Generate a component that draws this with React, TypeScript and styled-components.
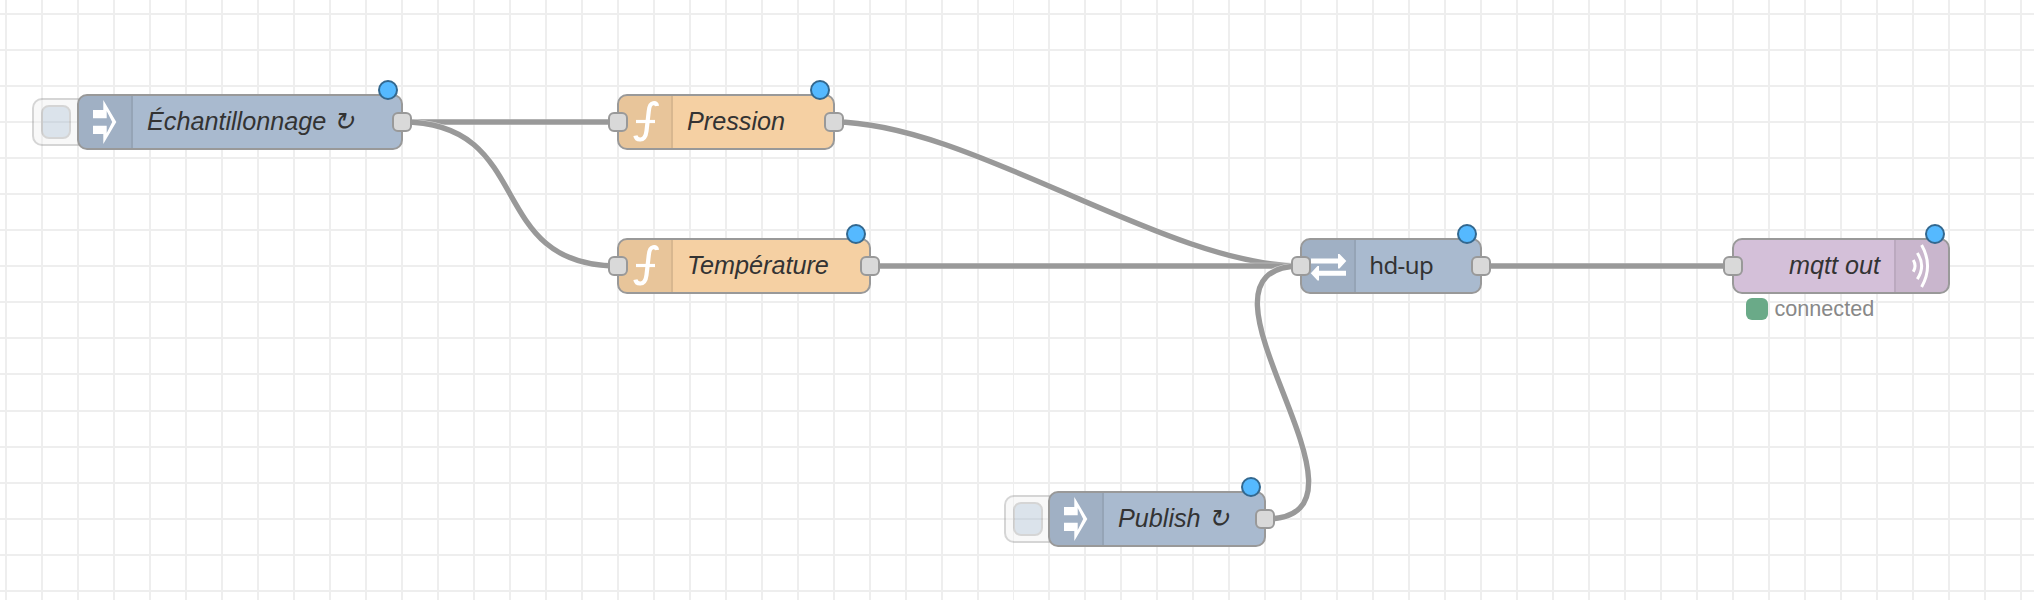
import React from 'react';
import styled, { createGlobalStyle } from 'styled-components';

const GlobalStyle = createGlobalStyle`
  body { margin: 0; background: #fff; }
`;

const Canvas = styled.main`
  position: relative;
  width: 2034px;
  height: 600px;
  overflow: hidden;
  background: #fff;
  font-family: 'Liberation Sans', Arial, sans-serif;
`;

const Backdrop = styled.svg`
  display: block;
`;

const NodeBox = styled.div<{ $x: number; $y: number; $w: number; $fill: string; $reverse?: boolean }>`
  position: absolute;
  left: ${(p) => p.$x - 1}px;
  top: ${(p) => p.$y - 28}px;
  width: ${(p) => p.$w + 2}px;
  height: 56px;
  box-sizing: border-box;
  display: flex;
  flex-direction: ${(p) => (p.$reverse ? 'row-reverse' : 'row')};
  border: 2px solid #999;
  border-radius: 10px;
  background: ${(p) => p.$fill};
`;

const IconCell = styled.div<{ $reverse?: boolean }>`
  flex: none;
  width: 54px;
  height: 52px;
  box-sizing: border-box;
  background: rgba(0, 0, 0, 0.05);
  border-radius: ${(p) => (p.$reverse ? '0 8px 8px 0' : '8px 0 0 8px')};
  border-${(p) => (p.$reverse ? 'left' : 'right')}: 2px solid rgba(0, 0, 0, 0.07);

  svg {
    display: block;
    margin: -1px 0 0 ${(p) => (p.$reverse ? '-2px' : '-1px')};
    overflow: visible;
  }
`;

const Label = styled.span<{ $plain?: boolean }>`
  margin: 0 ${(p) => (p.$plain ? '13.2px' : '14px')};
  font-size: ${(p) => (p.$plain ? '24px' : '25.2px')};
  letter-spacing: ${(p) => (p.$plain ? '-0.6px' : 'normal')};
  font-style: ${(p) => (p.$plain ? 'normal' : 'italic')};
  font-family: ${(p) => (p.$plain ? "'Noto Sans', sans-serif" : 'inherit')};
  line-height: ${(p) => (p.$plain ? '50px' : '51px')};
  white-space: pre;
  color: #333;
`;

const Port = styled.i<{ $side: 'left' | 'right' }>`
  position: absolute;
  ${(p) => p.$side}: -11px;
  top: 16px;
  width: 20px;
  height: 20px;
  box-sizing: border-box;
  border: 2px solid #999;
  border-radius: 6px;
  background: #d9d9d9;
`;

const ChangedDot = styled.i`
  position: absolute;
  right: 3.4px;
  top: -16.4px;
  width: 20px;
  height: 20px;
  box-sizing: border-box;
  border: 2px solid #33688f;
  border-radius: 50%;
  background: #55b9ff;
`;

const InjectButton = styled.div<{ $x: number; $y: number }>`
  position: absolute;
  left: ${(p) => p.$x}px;
  top: ${(p) => p.$y}px;
  width: 58px;
  height: 48px;
  box-sizing: border-box;
  padding: 5px 0 0 7px;
  border: 2px solid #999;
  border-radius: 10px;
  background: #eee;
  opacity: 0.4;
`;

const InjectFace = styled.div`
  width: 30px;
  height: 34px;
  box-sizing: border-box;
  border: 2px solid #999;
  border-radius: 8px;
  background: #a6bbcf;
`;

const Status = styled.div`
  position: absolute;
  left: 12px;
  top: 57px;
  display: flex;
  align-items: center;
  gap: 6.5px;
  font-size: 21.6px;
  line-height: 24px;
  color: #888;
`;

const StatusMark = styled.i`
  width: 22px;
  height: 22px;
  border-radius: 6px;
  background: #6aaa88;
`;

type IconName = 'inject' | 'function' | 'switch' | 'broadcast';

const icons: Record<IconName, React.ReactNode> = {
  inject: <path fill="#fff" d="M15 15H25.3V5L38.3 27L25.3 49V39H15V30.7H28.7V38L34.2 27L28.7 16V23.3H15Z" />,
  function: (
    <g fill="none" stroke="#fff">
      <path strokeWidth="4.2" d="M39 11C38.6 8.6 36.8 8 35 8.3C32 8.8 31.2 12 30.8 16L28.5 36C27.8 41.5 26.3 44.2 22.5 44.5C19.5 44.7 17.9 43.6 17.4 40.6" />
      <path strokeWidth="3.2" d="M18 26.5H37" />
    </g>
  ),
  switch: (
    <path fill="#fff" d="M10 19.6H37V15H38.5L45.3 22L38.5 29.4H37V24.6H10ZM45 31.8H18V27H16.5L9.8 34.3L16.5 41.5H18V36.8H45Z" />
  ),
  broadcast: (
    <g fill="none" stroke="#fff" strokeWidth="3">
      <path d="M19.3 21Q22.8 27 19.3 32.8" />
      <path d="M23.3 14Q32 27 23.3 40.2" />
      <path d="M27.6 6Q39.5 27 27.6 48" />
    </g>
  ),
};

interface FlowNode {
  x: number;
  y: number;
  w: number;
  label: string;
  fill: string;
  icon: IconName;
  input?: boolean;
  output?: boolean;
  buttonX?: number;
  reverse?: boolean;
  plain?: boolean;
  status?: string;
}

const BLUE = '#a9bacf';
const ORANGE = '#f5d0a3';
const PURPLE = '#d4c0d9';

const nodes: FlowNode[] = [
  { x: 78, y: 122, w: 324, label: 'Échantillonnage ↻', fill: BLUE, icon: 'inject', output: true, buttonX: 32 },
  { x: 618, y: 122, w: 216, label: 'Pression', fill: ORANGE, icon: 'function', input: true, output: true },
  { x: 618, y: 266, w: 252, label: 'Température', fill: ORANGE, icon: 'function', input: true, output: true },
  { x: 1301, y: 266, w: 180, label: 'hd-up', fill: BLUE, icon: 'switch', input: true, output: true, plain: true },
  { x: 1733, y: 266, w: 216, label: 'mqtt out', fill: PURPLE, icon: 'broadcast', input: true, reverse: true, status: 'connected' },
  { x: 1049, y: 519, w: 216, label: 'Publish ↻', fill: BLUE, icon: 'inject', output: true, buttonX: 1004 },
];

const wires: [number, number, number, number][] = [
  [402, 122, 618, 122],
  [402, 122, 618, 266],
  [834, 122, 1301, 266],
  [870, 266, 1301, 266],
  [1265, 519, 1301, 266],
  [1481, 266, 1733, 266],
];

const wirePath = ([x1, y1, x2, y2]: [number, number, number, number]) =>
  `M${x1} ${y1}C${x1 + 135} ${y1} ${x2 - 135} ${y2} ${x2} ${y2}`;

const columns = [
  ...Array.from({ length: 28 }, (_, i) => 5 + i * 36),
  ...Array.from({ length: 28 }, (_, i) => 1048 + i * 36),
];
const rows = [
  ...Array.from({ length: 11 }, (_, i) => 13 + i * 36),
  ...Array.from({ length: 6 }, (_, i) => 410 + i * 36),
];

function NodeView({ node }: { node: FlowNode }) {
  return (
    <>
      {node.buttonX !== undefined && (
        <InjectButton $x={node.buttonX} $y={node.y - 24}>
          <InjectFace />
        </InjectButton>
      )}
      <NodeBox $x={node.x} $y={node.y} $w={node.w} $fill={node.fill} $reverse={node.reverse}>
        <IconCell $reverse={node.reverse}>
          <svg width="54" height="54" viewBox="0 0 54 54">{icons[node.icon]}</svg>
        </IconCell>
        <Label $plain={node.plain}>{node.label}</Label>
        {node.input && <Port $side="left" />}
        {node.output && <Port $side="right" />}
        <ChangedDot />
        {node.status && (
          <Status>
            <StatusMark />
            {node.status}
          </Status>
        )}
      </NodeBox>
    </>
  );
}

export default function App() {
  return (
    <>
      <GlobalStyle />
      <Canvas>
        <Backdrop width="2034" height="600" viewBox="0 0 2034 600">
          <g fill="#eee">
            {columns.map((x) => <rect key={x} x={x} y="0" width="2" height="600" />)}
            <rect x="1013" y="0" width="1" height="600" />
            {rows.map((y) => <rect key={y} x="0" y={y} width="2034" height="2" />)}
          </g>
          <g fill="none">
            {wires.map((w) => (
              <g key={w.join()}>
                <path d={wirePath(w)} stroke="#fff" strokeOpacity="0.6" strokeWidth="6.6" />
                <path d={wirePath(w)} stroke="#999" strokeWidth="5.4" />
              </g>
            ))}
          </g>
        </Backdrop>
        {nodes.map((n) => <NodeView key={n.label} node={n} />)}
      </Canvas>
    </>
  );
}
